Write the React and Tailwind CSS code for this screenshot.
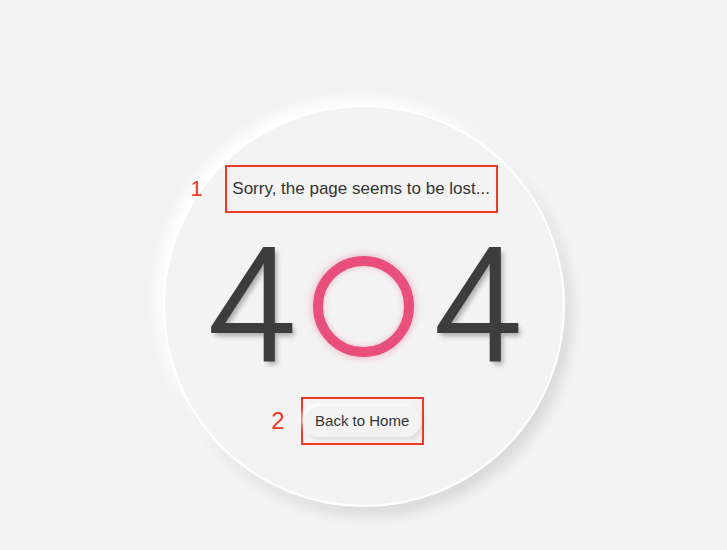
import React from "react";

const App = () => {
  return (
    <div className="min-h-[550px] w-full bg-[#f3f3f3] font-['Liberation_Sans',Arial,sans-serif] text-[#333]">
      <div className="flex justify-center pt-[105px]">
        {/* big neumorphic circle */}
        <div className="flex h-[402px] w-[402px] flex-col items-center rounded-full border-2 border-white bg-[#f3f3f3] shadow-[-6px_-6px_14px_#ffffff,6px_8px_14px_rgba(0,0,0,0.12)]">
          <div className="mt-[58px] flex items-center">
            <span className="mr-[22px] text-[22px] leading-none text-[#ee3a24]">1</span>
            <div className="flex h-[48px] w-[273px] items-center justify-center border-2 border-[#ee3a24] text-[17px]">
              Sorry, the page seems to be lost...
            </div>
            <span className="w-[39px]" />
          </div>

          <div className="mt-[23px] flex h-[140px] items-center">
            <span className="font-['Roboto',sans-serif] text-[157px] font-light leading-none text-[#3d3d3d] [-webkit-text-stroke:2px_#3d3d3d] [text-shadow:3px_4px_5px_rgba(0,0,0,0.3)]">
              4
            </span>
            <div className="mx-[19px] h-[101px] w-[101px] rounded-full border-[10px] border-[#e8507b] shadow-[0_0_8px_rgba(232,80,123,0.45),inset_0_0_6px_rgba(232,80,123,0.35)]" />
            <span className="font-['Roboto',sans-serif] text-[157px] font-light leading-none text-[#3d3d3d] [-webkit-text-stroke:2px_#3d3d3d] [text-shadow:3px_4px_5px_rgba(0,0,0,0.3)]">
              4
            </span>
          </div>

          <div className="mt-[21px] flex items-center">
            <span className="mr-[16px] text-[24px] leading-none text-[#ee3a24]">2</span>
            <div className="flex h-[48px] w-[123px] items-center justify-center border-2 border-[#ee3a24]">
              <button className="h-[31px] w-[117px] rounded-full bg-[#f3f3f3] text-[15px] text-[#333] shadow-[-2px_-2px_4px_#ffffff,2px_2px_5px_rgba(0,0,0,0.12)]">
                Back to Home
              </button>
            </div>
            <span className="w-[32px]" />
          </div>
        </div>
      </div>
    </div>
  );
};

export default App;
